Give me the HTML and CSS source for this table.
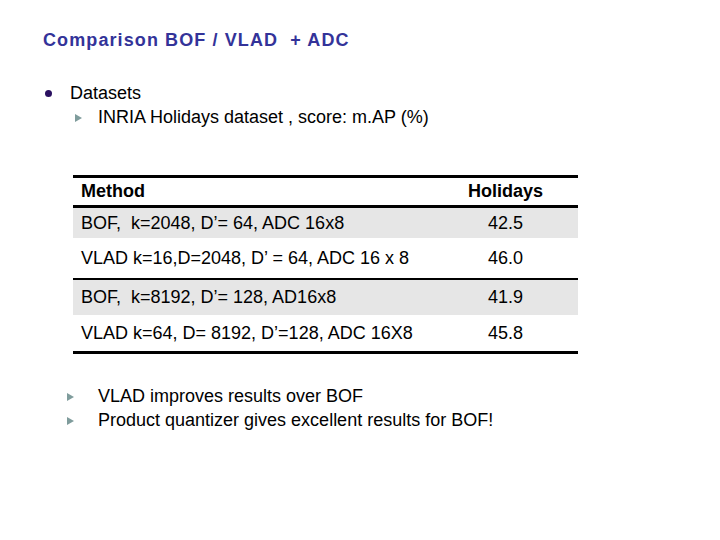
FILE: index.html
```html
<!DOCTYPE html>
<html>
<head>
<meta charset="utf-8">
<link rel="stylesheet" href="styles.css">
</head>
<body>
<div class="slide">
  <h1 class="title">Comparison BOF / VLAD&nbsp; + ADC</h1>
  <ul class="l1">
    <li class="dot">
      <span>Datasets</span>
      <ul class="l2">
        <li class="arrow">INRIA Holidays dataset , score: m.AP (%)</li>
      </ul>
    </li>
  </ul>
  <table class="res">
    <thead>
      <tr><th class="m">Method</th><th class="h">Holidays</th></tr>
    </thead>
    <tbody>
      <tr class="g r1"><td class="m">BOF,&nbsp; k=2048, D’= 64, ADC 16x8</td><td class="h">42.5</td></tr>
      <tr class="r2 sep"><td class="m">VLAD k=16,D=2048, D’ = 64, ADC 16 x 8</td><td class="h">46.0</td></tr>
      <tr class="g r3"><td class="m">BOF,&nbsp; k=8192, D’= 128, AD16x8</td><td class="h">41.9</td></tr>
      <tr class="r4"><td class="m">VLAD k=64, D= 8192, D’=128, ADC 16X8</td><td class="h">45.8</td></tr>
    </tbody>
  </table>
  <ul class="l3">
    <li class="arrow">VLAD improves results over BOF</li>
    <li class="arrow">Product quantizer gives excellent results for BOF!</li>
  </ul>
</div>
</body>
</html>
```

FILE: styles.css
```css
html, body {
  margin: 0;
  padding: 0;
  background: #fff;
}
body {
  width: 720px;
  height: 540px;
  overflow: hidden;
  font-family: "Liberation Sans", Arial, sans-serif;
  color: #000;
}
.slide {
  padding: 29px 0 0 43px;
}
.title {
  margin: 0;
  font-size: 18px;
  letter-spacing: 1.1px;
  font-weight: bold;
  color: #333399;
  line-height: 22px;
}
ul {
  list-style: none;
  margin: 0;
  padding: 0;
}
.l1 {
  margin-top: 30px;
  font-size: 18px;
  line-height: 24px;
}
.dot {
  position: relative;
  padding-left: 27px;
}
.dot::before {
  content: "";
  position: absolute;
  left: 2px;
  top: 9px;
  width: 7px;
  height: 7px;
  border-radius: 50%;
  background: #2a1060;
}
.l2 {
  font-size: 18px;
  line-height: 25px;
}
.l2 .arrow {
  padding-left: 28px;
}
.l2 .arrow::before {
  left: 5px;
}
.arrow {
  position: relative;
}
.arrow::before {
  content: "";
  position: absolute;
  top: 9px;
  border-left: 7px solid #7f9c9c;
  border-top: 4px solid transparent;
  border-bottom: 4px solid transparent;
}
.res {
  margin: 45px 0 0 30px;
  width: 505px;
  border-collapse: collapse;
  font-size: 18px;
  border-top: 3px solid #000;
  border-bottom: 3px solid #000;
}
.res th {
  font-weight: bold;
  font-size: 18px;
  height: 27px;
  padding: 0;
  border-bottom: 3px solid #000;
}
.res td {
  padding: 0;
}
.res .m {
  text-align: left;
  padding-left: 8px;
}
.res .h {
  text-align: center;
  width: 145px;
}
.res .g {
  background: #e6e6e6;
}
.r1 td { height: 30px; }
.r2 td { height: 40px; border-bottom: 2px solid #000; }
.r3 td { height: 35px; }
.r4 td { height: 36px; }
.l3 {
  margin-top: 30px;
  font-size: 18px;
  line-height: 24px;
}
.l3 .arrow {
  padding-left: 55px;
}
.l3 .arrow::before {
  left: 24px;
}
```
